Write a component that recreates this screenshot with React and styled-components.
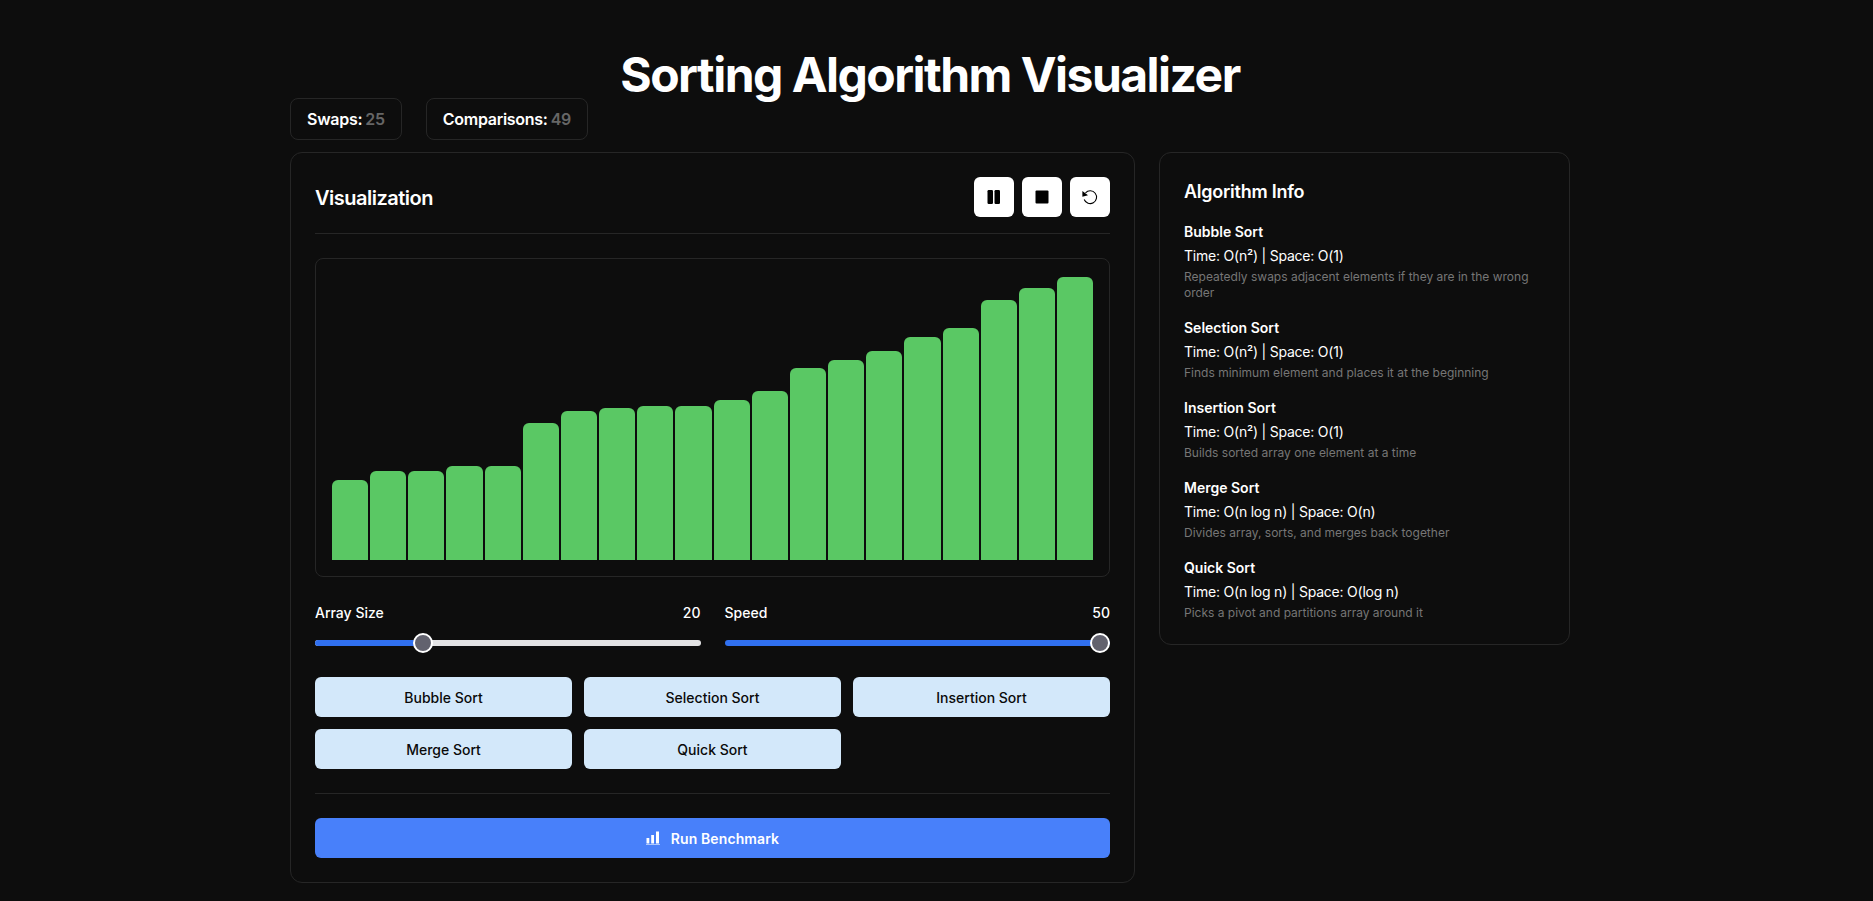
import React from 'react';
import styled, { createGlobalStyle } from 'styled-components';

const Global = createGlobalStyle`
  * { box-sizing: border-box; }
  html, body { margin: 0; padding: 0; background: #0d0d0d; }
  body { font-family: Inter, "Liberation Sans", sans-serif; color: #fff; padding-right: 13px; }
`;

const Page = styled.div`
  width: 1280px;
  margin: 0 auto;
  padding: 51px 0 10px;
`;
const Title = styled.h1`
  margin: 0;
  font-size: 48px;
  line-height: 47px;
  font-weight: 700;
  letter-spacing: -1.52px;
  text-align: center;
  color: #fff;
`;
const Stats = styled.div`
  display: flex;
  gap: 24px;
  margin-bottom: 12px;
`;
const Stat = styled.div`
  height: 42px;
  padding: 0 16px;
  display: flex;
  align-items: center;
  gap: 3px;
  border: 1px solid #262626;
  border-radius: 8px;
  font-size: 16px;
  font-weight: 600;
  letter-spacing: -0.27px;
`;
const StatValue = styled.span`
  color: #666;
`;
const Columns = styled.div`
  display: grid;
  grid-template-columns: 845px 411px;
  gap: 24px;
  align-items: start;
`;
const Card = styled.section`
  border: 1px solid #262626;
  border-radius: 12px;
  padding: 24px;
`;
const InfoCard = styled(Card)`
  padding-bottom: 23px;
`;
const CardHeader = styled.div`
  display: flex;
  align-items: center;
  justify-content: space-between;
  padding-bottom: 16px;
  border-bottom: 1px solid #262626;
  margin-bottom: 24px;
`;
const CardTitle = styled.h2`
  margin: 0;
  padding-top: 1px;
  font-size: 20px;
  line-height: 28px;
  font-weight: 600;
  letter-spacing: -0.5px;
`;
const Controls = styled.div`
  display: flex;
  gap: 8px;
`;
const IconButton = styled.button`
  width: 40px;
  height: 40px;
  padding: 0;
  border: 0;
  border-radius: 6px;
  background: #fff;
  color: #000;
  display: flex;
  align-items: center;
  justify-content: center;
`;
const Chart = styled.div`
  height: 319px;
  border: 1px solid #262626;
  border-radius: 8px;
  padding: 16px;
  display: flex;
  align-items: flex-end;
  gap: 2px;
`;
const Bar = styled.div`
  flex: 1;
  background: #5ac864;
  border-radius: 6px 6px 0 0;
`;
const Sliders = styled.div`
  display: grid;
  grid-template-columns: 1fr 1fr;
  gap: 24px;
  margin: 24px 0;
`;
const SliderBox = styled.div`
  display: flex;
  flex-direction: column;
  gap: 9px;
`;
const SliderHead = styled.div`
  display: flex;
  justify-content: space-between;
  padding-top: 1px;
  font-size: 14px;
  line-height: 22px;
  font-weight: 500;
`;
const Track = styled.div`
  position: relative;
  height: 20px;
  display: flex;
  align-items: center;
`;
const Rail = styled.div`
  width: 100%;
  height: 6px;
  border-radius: 3px;
  background: #e2e2e4;
  overflow: hidden;
`;
const Fill = styled.div`
  height: 100%;
  background: #3070f0;
`;
const Thumb = styled.div`
  position: absolute;
  top: 0;
  width: 20px;
  height: 20px;
  border-radius: 50%;
  background: #62626e;
  border: 2px solid #fff;
`;
const Algorithms = styled.div`
  display: grid;
  grid-template-columns: repeat(3, 1fr);
  gap: 12px;
  padding-bottom: 24px;
  border-bottom: 1px solid #262626;
  margin-bottom: 24px;
`;
const AlgoButton = styled.button`
  height: 40px;
  border: 0;
  border-radius: 6px;
  background: #d3e8fa;
  color: #0a0a0a;
  font: 500 14px Inter, "Liberation Sans", sans-serif;
`;
const RunButton = styled.button`
  width: 100%;
  height: 40px;
  border: 0;
  border-radius: 6px;
  background: #4880fa;
  color: #fff;
  font: 600 14px Inter, "Liberation Sans", sans-serif;
  letter-spacing: 0.1px;
  display: flex;
  align-items: center;
  justify-content: center;
  gap: 11px;
`;
const InfoTitle = styled.h3`
  margin: 0 0 15px;
  font-size: 18px;
  line-height: 30px;
  font-weight: 600;
  letter-spacing: -0.25px;
`;
const InfoItem = styled.div`
  margin-bottom: 17px;
  &:last-child { margin-bottom: 0; }
`;
const InfoName = styled.div`
  font-size: 14px;
  line-height: 20px;
  font-weight: 600;
  margin-bottom: 4px;
`;
const InfoComplexity = styled.div`
  font-size: 14px;
  line-height: 20px;
  letter-spacing: -0.22px;
  margin-bottom: 3px;
`;
const InfoDesc = styled.div`
  font-size: 12px;
  line-height: 16px;
  color: #767676;
`;

const heights = [80, 89, 89, 94, 94, 137, 149, 152, 154, 154, 160, 169, 192, 200, 209, 223, 232, 260, 272, 283];
const algorithms = ['Bubble Sort', 'Selection Sort', 'Insertion Sort', 'Merge Sort', 'Quick Sort'];
const info = [
  ['Bubble Sort', 'Time: O(n²) | Space: O(1)', 'Repeatedly swaps adjacent elements if they are in the wrong order'],
  ['Selection Sort', 'Time: O(n²) | Space: O(1)', 'Finds minimum element and places it at the beginning'],
  ['Insertion Sort', 'Time: O(n²) | Space: O(1)', 'Builds sorted array one element at a time'],
  ['Merge Sort', 'Time: O(n log n) | Space: O(n)', 'Divides array, sorts, and merges back together'],
  ['Quick Sort', 'Time: O(n log n) | Space: O(log n)', 'Picks a pivot and partitions array around it'],
];

const PauseGlyph = () => (
  <svg width="14" height="14" viewBox="0 0 14 14" fill="currentColor">
    <rect x="0.5" y="0" width="5.5" height="14" rx="1.2" />
    <rect x="7.5" y="0" width="5.5" height="14" rx="1.2" />
  </svg>
);
const StopGlyph = () => (
  <svg width="14" height="14" viewBox="0 0 14 14" fill="currentColor">
    <rect x="0.5" y="0.5" width="13" height="13" rx="1" />
  </svg>
);
const ResetGlyph = () => (
  <svg width="16" height="16" viewBox="0 0 16 16" fill="none">
    <path d="M3.5 3.8A6.4 6.4 0 1 1 2.2 10.5" stroke="currentColor" strokeWidth="1.1" />
    <path d="M0.4 2 L6 6.2 L0.4 7.8 Z" fill="currentColor" />
  </svg>
);
const ChartGlyph = () => (
  <svg width="14" height="14" viewBox="0 0 14 14" fill="currentColor">
    <rect x="0.5" y="7" width="2.8" height="5.5" />
    <rect x="5.2" y="4" width="2.8" height="8.5" />
    <rect x="10" y="0.5" width="3" height="12" />
    <rect x="0" y="13" width="14" height="1" opacity="0.55" />
  </svg>
);

const Slider = ({ label, value, ratio }) => (
  <SliderBox>
    <SliderHead>
      <span>{label}</span>
      <span>{value}</span>
    </SliderHead>
    <Track>
      <Rail>
        <Fill style={{ width: `${ratio * 100}%` }} />
      </Rail>
      <Thumb style={{ left: `calc((100% - 20px) * ${ratio})` }} />
    </Track>
  </SliderBox>
);

export default function App() {
  return (
    <Page>
      <Global />
      <Title>Sorting Algorithm Visualizer</Title>
      <Stats>
        <Stat>Swaps: <StatValue>25</StatValue></Stat>
        <Stat>Comparisons: <StatValue>49</StatValue></Stat>
      </Stats>
      <Columns>
        <Card>
          <CardHeader>
            <CardTitle>Visualization</CardTitle>
            <Controls>
              <IconButton aria-label="Pause"><PauseGlyph /></IconButton>
              <IconButton aria-label="Stop"><StopGlyph /></IconButton>
              <IconButton aria-label="Reset"><ResetGlyph /></IconButton>
            </Controls>
          </CardHeader>
          <Chart>
            {heights.map((h, i) => <Bar key={i} style={{ height: h }} />)}
          </Chart>
          <Sliders>
            <Slider label="Array Size" value={20} ratio={0.268} />
            <Slider label="Speed" value={50} ratio={1} />
          </Sliders>
          <Algorithms>
            {algorithms.map((a) => <AlgoButton key={a}>{a}</AlgoButton>)}
          </Algorithms>
          <RunButton><ChartGlyph />Run Benchmark</RunButton>
        </Card>
        <InfoCard>
          <InfoTitle>Algorithm Info</InfoTitle>
          {info.map(([name, complexity, desc]) => (
            <InfoItem key={name}>
              <InfoName>{name}</InfoName>
              <InfoComplexity>{complexity}</InfoComplexity>
              <InfoDesc>{desc}</InfoDesc>
            </InfoItem>
          ))}
        </InfoCard>
      </Columns>
    </Page>
  );
}
